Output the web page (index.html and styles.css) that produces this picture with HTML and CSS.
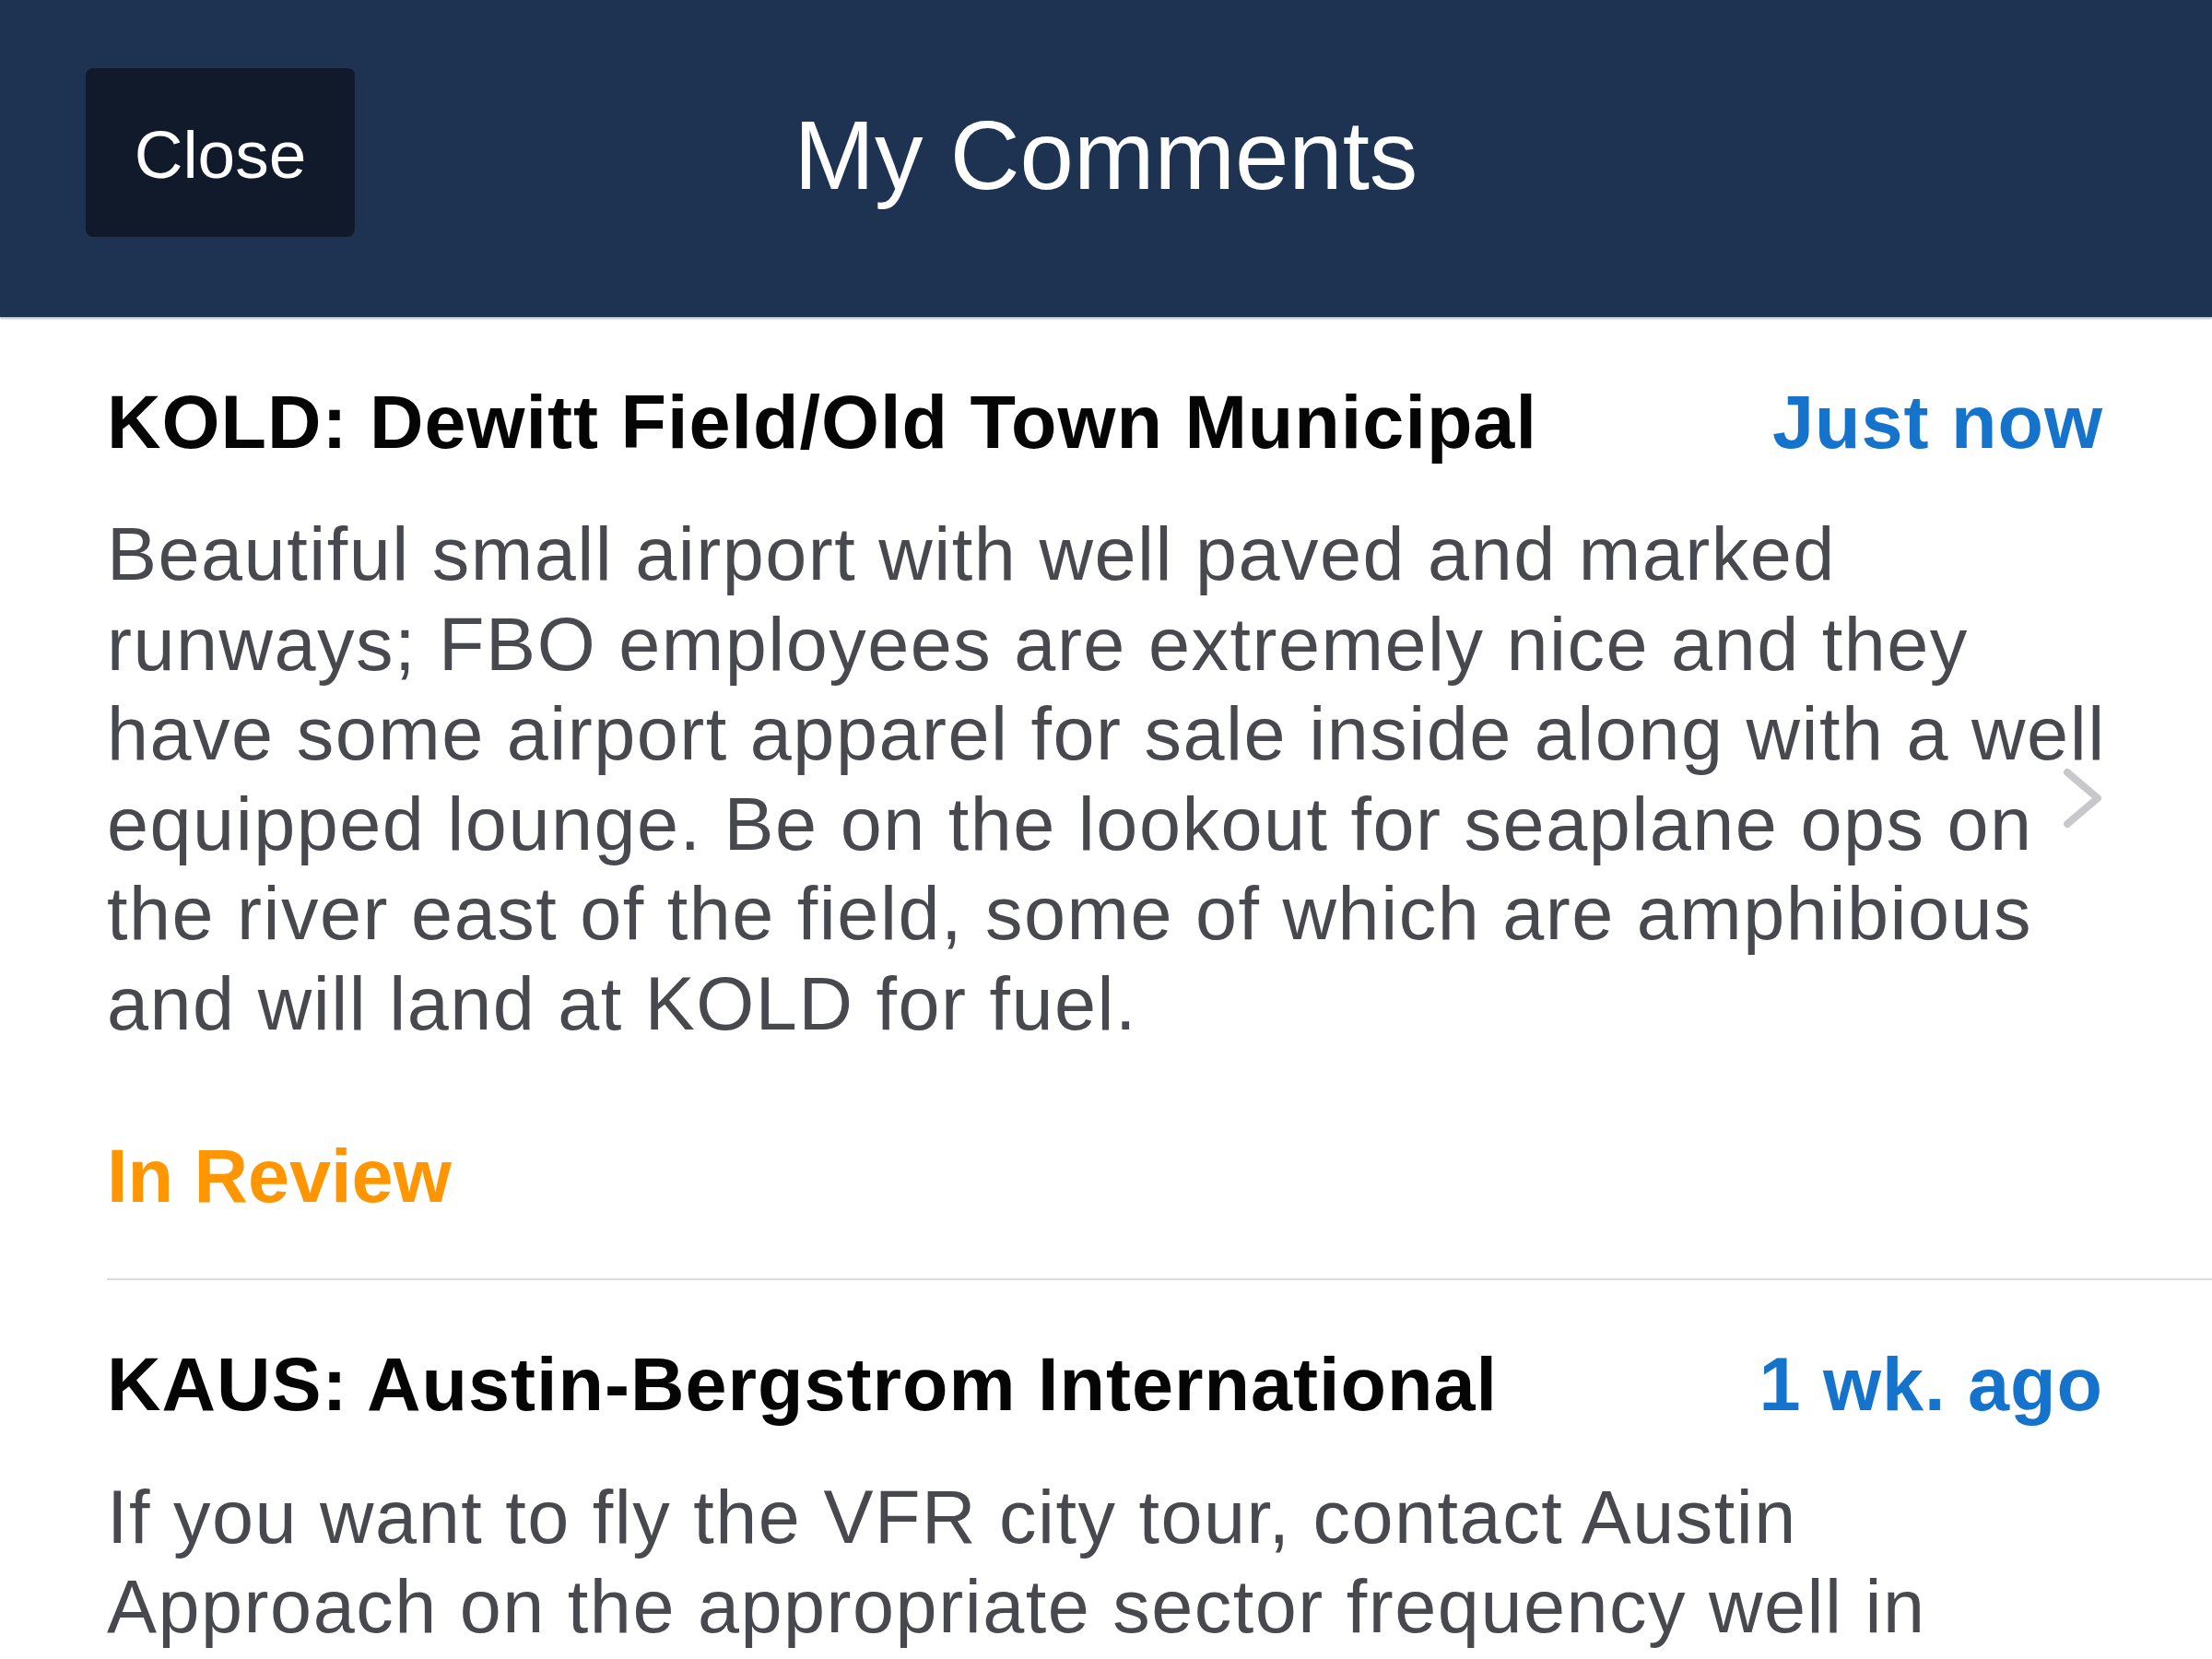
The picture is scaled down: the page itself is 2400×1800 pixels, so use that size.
FILE: index.html
```html
<!DOCTYPE html>
<html lang="en">
<head>
<meta charset="utf-8">
<title>My Comments</title>
<link rel="stylesheet" href="styles.css">
</head>
<body>
<header class="navbar">
  <div class="nav-left"><button class="close-btn">Close</button></div>
  <h1 class="nav-title">My Comments</h1>
  <div class="nav-right"></div>
</header>
<main class="list">
  <section class="item">
    <div class="item-head">
      <span class="item-title">KOLD: Dewitt Field/Old Town Municipal</span>
      <span class="item-time">Just now</span>
    </div>
    <p class="item-body">Beautiful small airport with well paved and marked<br>runways; FBO employees are extremely nice and they<br>have some airport apparel for sale inside along with a well<br>equipped lounge. Be on the lookout for seaplane ops on<br>the river east of the field, some of which are amphibious<br>and will land at KOLD for fuel.</p>
    <div class="item-status review">In Review</div>
    <svg class="chevron" width="44" height="66" viewBox="0 0 44 66" aria-hidden="true"><polyline points="5,5 38,33 5,61" fill="none" stroke="#c7c7cc" stroke-width="8" stroke-linecap="round" stroke-linejoin="round"/></svg>
  </section>
  <section class="item">
    <div class="item-head">
      <span class="item-title">KAUS: Austin-Bergstrom International</span>
      <span class="item-time">1 wk. ago</span>
    </div>
    <p class="item-body">If you want to fly the VFR city tour, contact Austin<br>Approach on the appropriate sector frequency well in<br>advance of reaching the class B airspace.</p>
  </section>
</main>
</body>
</html>
```
FILE: styles.css
```css
html, body {
  margin: 0;
  padding: 0;
  background: #ffffff;
}
body {
  font-family: "Liberation Sans", Arial, sans-serif;
  overflow: hidden;
}
.navbar {
  height: 344px;
  box-sizing: border-box;
  background: #1e3352;
  display: grid;
  grid-template-columns: 1fr auto 1fr;
  align-items: start;
  padding-top: 74px;
  box-shadow: 0 2px 2px rgba(60, 80, 110, 0.35);
  position: relative;
  z-index: 1;
}
.nav-left {
  padding-left: 93px;
}
.close-btn {
  width: 292px;
  height: 183px;
  border: none;
  border-radius: 8px;
  background: #111a2a;
  color: #ffffff;
  font-family: "Liberation Sans", Arial, sans-serif;
  font-size: 73px;
  padding: 4px 0 0 0;
  display: flex;
  align-items: center;
  justify-content: center;
}
.nav-title {
  margin: 36px 0 0 0;
  font-size: 105px;
  font-weight: normal;
  line-height: 1.117;
  color: #ffffff;
}
.list {
  padding: 0;
}
.item {
  position: relative;
  margin-left: 116px;
  padding: 66px 118px 62px 0;
  border-bottom: 2px solid #dcdce0;
}
.item + .item {
  padding-top: 65px;
}
.item-head {
  display: flex;
  justify-content: space-between;
  align-items: baseline;
  font-size: 81px;
  font-weight: bold;
  line-height: 97.2px;
  letter-spacing: 1px;
}
.item-title {
  color: #050505;
}
.item-time {
  color: #1573cc;
}
.item-body {
  margin: 46px 0 0 0;
  font-size: 81px;
  line-height: 97.5px;
  color: #48484f;
  letter-spacing: 1.5px;
  white-space: nowrap;
}
.item-status {
  margin-top: 90px;
  font-size: 81px;
  font-weight: bold;
  line-height: 97.2px;
}
.review {
  color: #ff9500;
}
.chevron {
  position: absolute;
  right: 118px;
  top: 50%;
  transform: translateY(-50%);
}
```
